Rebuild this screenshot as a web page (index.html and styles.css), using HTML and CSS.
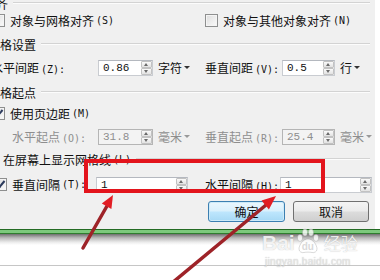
FILE: index.html
```html
<!DOCTYPE html>
<html>
<head>
    <meta charset="utf-8">
    <meta name="viewport" content="width=device-width, initial-scale=1.0">
    <link rel="stylesheet" href="styles.css">
</head>
<body>
<div class="dialog">
    <div class="group first">
        <div class="legend top">对齐</div>
        <div class="row r1">
            <label class="check span-left"><span class="box"></span>对象与网格对齐<span class="key">(S)</span></label>
            <label class="check span-right"><span class="box"></span>对象与其他对象对齐<span class="key">(N)</span></label>
        </div>
    </div>

    <div class="group g2">
        <div class="legend">网格设置</div>
        <div class="row r2">
            <span class="label">水平间距<span class="key">(Z):</span></span>
            <div class="field">
                <div class="spin"><span class="val">0.86</span><span class="arrows"><i></i><i class="dn"></i></span></div>
                <span class="unit">字符</span>
            </div>
            <span class="label">垂直间距<span class="key">(V):</span></span>
            <div class="field">
                <div class="spin narrow"><span class="val">0.5</span><span class="arrows"><i></i><i class="dn"></i></span></div>
                <span class="unit">行</span>
            </div>
        </div>
    </div>

    <div class="group g3">
        <div class="legend">网格起点</div>
        <div class="row r3">
            <label class="check checked span-left"><span class="box"></span>使用页边距<span class="key">(M)</span></label>
        </div>
        <div class="row r4 off">
            <span class="label indent">水平起点<span class="key">(O):</span></span>
            <div class="field">
                <div class="spin"><span class="val">31.8</span><span class="arrows"><i></i><i class="dn"></i></span></div>
                <span class="unit">毫米</span>
            </div>
            <span class="label">垂直起点<span class="key">(R):</span></span>
            <div class="field">
                <div class="spin narrow"><span class="val">25.4</span><span class="arrows"><i></i><i class="dn"></i></span></div>
                <span class="unit">毫米</span>
            </div>
        </div>
    </div>

    <div class="group g4">
        <div class="legend check-legend"><span class="check checked"><span class="box"></span>在屏幕上显示网格线<span class="key">(L)</span></span></div>
        <div class="row r5">
            <label class="check checked sub"><span class="box"></span>垂直间隔<span class="key">(T):</span></label>
            <div class="field">
                <div class="spin wide"><span class="val">1</span><span class="arrows"><i></i><i class="dn"></i></span></div>
            </div>
            <span class="label">水平间隔<span class="key">(H):</span></span>
            <div class="field">
                <div class="spin wide"><span class="val">1</span><span class="arrows"><i></i><i class="dn"></i></span></div>
            </div>
        </div>
    </div>

    <div class="buttons">
        <button class="btn default">确定</button>
        <button class="btn">取消</button>
    </div>
</div>

<div class="frame-edge"></div>
<div class="frame-shadow"></div>
<div class="page-line"></div>

<div class="mark-box"></div>

<div class="watermark">
    <div class="wm-logo">
        <span class="wm-bai">Bai</span>
        <span class="wm-paw">
            <svg width="26" height="26" viewBox="0 0 26 26">
                <g fill="rgba(255,255,255,0.8)" stroke="rgba(120,120,120,0.35)" stroke-width="0.8">
                    <ellipse cx="5" cy="10" rx="2.6" ry="3.4"/>
                    <ellipse cx="10" cy="4.5" rx="2.6" ry="3.4"/>
                    <ellipse cx="16" cy="4.5" rx="2.6" ry="3.4"/>
                    <ellipse cx="21" cy="10" rx="2.6" ry="3.4"/>
                    <path d="M13 11 C8 11 4 17 4 21 C4 24 7 25 9 24.5 C11 24 15 24 17 24.5 C19 25 22 24 22 21 C22 17 18 11 13 11 Z"/>
                </g>
            </svg>
            <span class="wm-du">du</span>
        </span>
        <span class="wm-jy">经验</span>
    </div>
    <div class="wm-url">jingyan.baidu.com</div>
</div>

<svg class="arrows-layer" width="380" height="280" viewBox="0 0 380 280">
    <line x1="83" y1="248" x2="107" y2="206" stroke="#9e2328" stroke-width="3.5" stroke-linecap="round"/>
    <polygon points="113,195 111.4,209 101.8,203.6" fill="#e21d24"/>
    <line x1="172" y1="283" x2="266" y2="205" stroke="#9e2328" stroke-width="3.5" stroke-linecap="round"/>
    <polygon points="276,196 268.9,209.4 261.5,200.4" fill="#e21d24"/>
</svg>
</body>
</html>
```

FILE: styles.css
```css
body {
    margin: 0;
    width: 380px;
    height: 280px;
    overflow: hidden;
    position: relative;
    background: #fff;
    font-family: "Noto Sans CJK SC", "Noto Sans", sans-serif;
    font-size: 12px;
    color: #111;
}

.dialog {
    box-sizing: border-box;
    width: 389px;
    height: 229px;
    margin-left: -14px;
    padding: 0 5px 0 0;
    overflow: hidden;
    background: #f0f0f0;
    display: flex;
    flex-direction: column;
}

.group.first { margin-top: -5px; }
.g2 { margin-top: 8px; }
.g3 { margin-top: 9px; }
.g4 { margin-top: 7px; }

.legend {
    display: flex;
    align-items: center;
    height: 16px;
    padding-left: 2px;
    white-space: nowrap;
}

.legend::after {
    content: "";
    flex: 1;
    margin-left: 5px;
    border-top: 1px solid #d3d3d3;
    border-bottom: 1px solid #fcfcfc;
}

.legend.top { margin-left: -4px; }
.legend.check-legend { padding-left: 0; }

.row {
    display: grid;
    grid-template-columns: 107px 107px 77px 1fr;
    align-items: center;
    height: 16px;
    padding-left: 5px;
    white-space: nowrap;
}

.r1 { margin-top: 1px; }
.r2 { margin-top: 7px; }
.r3 { margin-top: 5px; }
.r4 { margin-top: 7px; }
.r5 { margin-top: 9px; }

.span-left { grid-column: 1 / 3; }
.span-right { grid-column: 3 / 5; }

.key {
    font-family: "DejaVu Sans Mono", monospace;
    font-size: 10px;
    margin-left: 2px;
}

.label.indent { padding-left: 21px; }

.check {
    display: flex;
    align-items: center;
}

.check .box {
    box-sizing: border-box;
    width: 13px;
    height: 13px;
    margin-right: 5px;
    border: 1px solid #8e8f8f;
    background: linear-gradient(135deg, #dcdcdc, #fbfbfb);
    box-shadow: inset 0 0 0 1px #f4f4f4;
    position: relative;
}

.span-left.check { margin-left: 1px; }
.check.sub { margin-left: 3px; }
.check-legend .check .box { margin-right: 4px; }

.check.checked .box::after {
    content: "";
    position: absolute;
    left: 3px;
    top: 0px;
    width: 3px;
    height: 7px;
    border: solid #2b3a5c;
    border-width: 0 2px 2px 0;
    transform: rotate(40deg);
}

.field {
    display: flex;
    align-items: center;
}

.spin {
    box-sizing: border-box;
    display: flex;
    width: 55px;
    height: 16px;
    border: 1px solid #c9ccd1;
    border-top-color: #b4b8bf;
    background: #fff;
}

.spin.narrow { width: 53px; }
.spin.wide { width: 92px; margin-left: -2px; }

.spin .val {
    flex: 1;
    padding-left: 4px;
    font-family: "Liberation Mono", monospace;
    font-size: 11px;
    line-height: 14px;
}

.spin .arrows {
    width: 11px;
    display: flex;
    flex-direction: column;
}

.spin .arrows i {
    flex: 1;
    position: relative;
    border: 1px solid #c2c2c2;
    border-radius: 1px;
    background: linear-gradient(#fafafa, #e2e2e2);
}

.spin .arrows i::before {
    content: "";
    position: absolute;
    left: 2px;
    top: 1px;
    border-left: 2.5px solid transparent;
    border-right: 2.5px solid transparent;
    border-bottom: 3px solid #6a6a6a;
}

.spin .arrows i.dn::before {
    border-bottom: 0;
    border-top: 3px solid #6a6a6a;
}

.unit {
    display: flex;
    align-items: center;
    margin-left: 5px;
}

.unit::after {
    content: "";
    margin-left: 2px;
    border-left: 3px solid transparent;
    border-right: 3px solid transparent;
    border-top: 3px solid #333;
}

.off .label,
.off .unit,
.off .spin .val {
    color: #8e8e8e;
}

.off .spin {
    background: #f3f3f3;
    border-color: #b5b5b5;
}

.off .unit::after { border-top-color: #999; }

.buttons {
    display: flex;
    justify-content: flex-end;
    gap: 8px;
    margin-top: 9px;
    margin-right: 1px;
}

.btn {
    box-sizing: border-box;
    width: 76px;
    height: 21px;
    padding: 0;
    border: 1px solid #707070;
    border-radius: 3px;
    background: linear-gradient(#f4f4f4 0%, #ebebeb 48%, #dcdcdc 52%, #cfcfcf 100%);
    font: inherit;
    color: #111;
}

.btn.default {
    width: 77px;
    border-color: #3c7fb1;
    background: linear-gradient(#eaf6fd 0%, #d9f0fc 48%, #bee6fd 52%, #a7d9f5 100%);
    box-shadow: inset 0 0 0 1px #cdeaf8;
}

.frame-edge {
    height: 3px;
    border-top: 1px solid #246b24;
    border-bottom: 1px solid #2f7d2f;
    background: #7cc97c;
}

.frame-shadow {
    height: 11px;
    background: linear-gradient(#6f6f6f, #b9b9b9 35%, #ececec 75%, #fff);
}

.page-line {
    margin-top: 20px;
    border-top: 1px solid #c6c6c6;
}

.mark-box {
    position: absolute;
    left: 84px;
    top: 159px;
    width: 241px;
    height: 34px;
    box-sizing: border-box;
    border: 4px solid #e3141c;
}

.watermark {
    position: absolute;
    left: 262px;
    top: 226px;
    color: rgba(255, 255, 255, 0.85);
    text-shadow: 0 0 1px rgba(90, 90, 90, 0.45);
    font-family: "Liberation Sans", sans-serif;
}

.wm-logo {
    display: flex;
    align-items: flex-end;
    height: 28px;
}

.wm-bai {
    font-size: 21px;
    font-weight: bold;
    line-height: 22px;
}

.wm-paw {
    position: relative;
    width: 26px;
    height: 26px;
}

.wm-paw svg { display: block; }

.wm-du {
    position: absolute;
    left: 7px;
    top: 13px;
    font-size: 10px;
    font-weight: bold;
    color: rgba(200, 200, 200, 0.7);
    text-shadow: none;
}

.wm-jy {
    margin-left: 3px;
    font-family: "Noto Sans CJK SC", sans-serif;
    font-size: 17px;
    line-height: 22px;
}

.wm-url {
    margin-top: 2px;
    margin-left: 3px;
    font-size: 10px;
    letter-spacing: 0.3px;
    color: rgba(235, 235, 235, 0.9);
}

.arrows-layer {
    position: absolute;
    left: 0;
    top: 0;
}
```
